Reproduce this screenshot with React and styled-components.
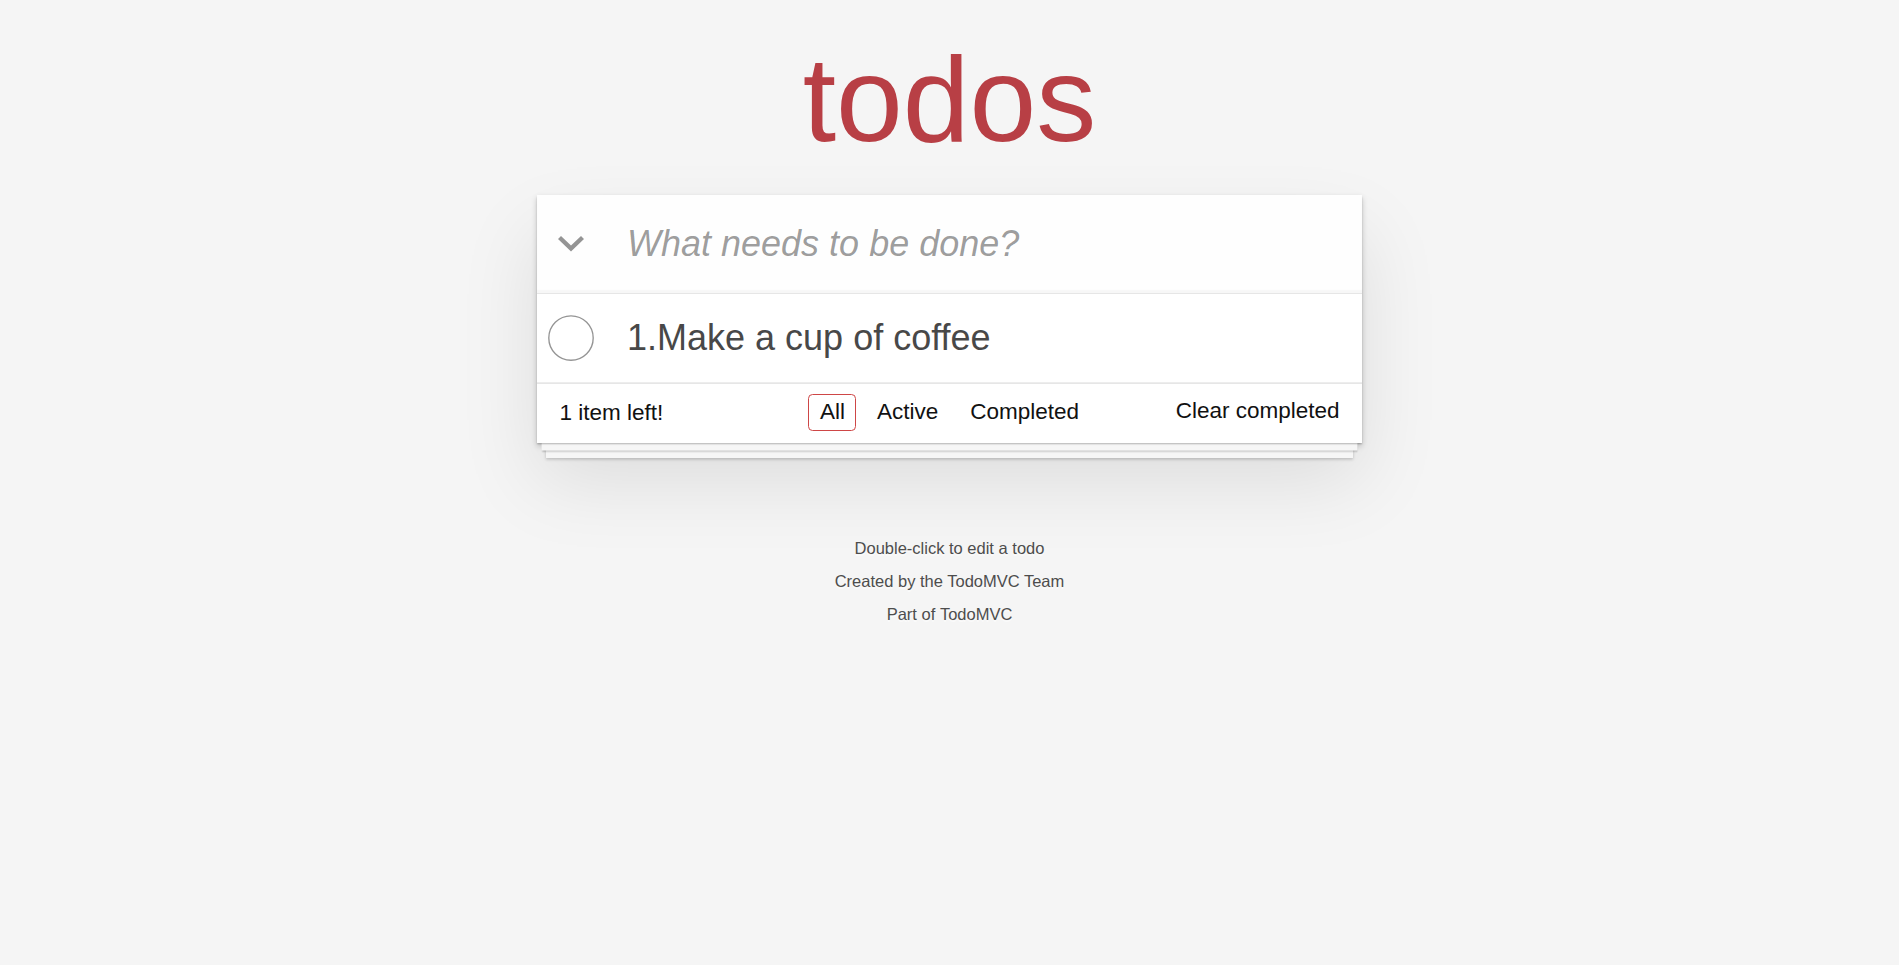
import { useState } from 'react'
import styled, { createGlobalStyle } from 'styled-components'

const GlobalStyle = createGlobalStyle`
  html,
  body {
    margin: 0;
    padding: 0;
  }

  body {
    background: #f5f5f5;
    color: #111111;
    font-family: 'Liberation Sans', Arial, sans-serif;
    font-size: 21px;
    font-weight: 300;
    line-height: 29.4px;
    min-width: 345px;
  }
`

const Page = styled.div`
  margin: 0 auto;
  padding-top: 39px;
  width: 825px;
`

const Title = styled.h1`
  color: #b83f45;
  font-size: 120px;
  font-weight: 200;
  line-height: 120px;
  margin: 0 0 36px;
  text-align: center;
  text-rendering: optimizeLegibility;
`

// the stacked "pages" under the footer are just extra shadows on the card
const Card = styled.section`
  background: #fff;
  box-shadow: 0 1.5px 1.5px rgba(0, 0, 0, 0.2), 0 12px 0 -4.5px #f6f6f6, 0 13.5px 1.5px -4.5px rgba(0, 0, 0, 0.2),
    0 24px 0 -9px #f6f6f6, 0 25.5px 3px -9px rgba(0, 0, 0, 0.2), 0 3px 6px 0 rgba(0, 0, 0, 0.2),
    0 37.5px 75px 0 rgba(0, 0, 0, 0.1);
`

const Header = styled.header`
  align-items: center;
  background: rgba(0, 0, 0, 0.003);
  box-shadow: inset 0 -3px 1.5px rgba(0, 0, 0, 0.03);
  display: flex;
  height: 97.5px;
`

const ToggleAll = styled.button`
  align-items: center;
  background: none;
  border: none;
  cursor: pointer;
  display: flex;
  flex: 0 0 67.5px;
  height: 100%;
  justify-content: center;
  padding: 0;
`

const NewTodo = styled.input`
  background: transparent;
  border: none;
  box-sizing: border-box;
  color: inherit;
  flex: 1;
  font-family: inherit;
  font-size: 36px;
  font-weight: inherit;
  height: 100%;
  outline: none;
  padding: 0 36px 0 22.5px;

  &::placeholder {
    color: rgba(0, 0, 0, 0.4);
    font-style: italic;
    font-weight: 400;
  }
`

const TodoList = styled.ul`
  border-top: 1px solid #e6e6e6;
  list-style: none;
  margin: 0;
  padding: 0;
`

const TodoItem = styled.li`
  align-items: center;
  border-bottom: 1px solid #ededed;
  display: flex;
  font-size: 36px;
`

const Toggle = styled.button`
  align-items: center;
  background: none;
  border: none;
  cursor: pointer;
  display: flex;
  flex: 0 0 67.5px;
  justify-content: center;
  padding: 0 0 0 1px;
`

const TodoLabel = styled.label`
  color: ${({ $done }) => ($done ? '#949494' : '#484848')};
  display: block;
  flex: 1;
  font-weight: 400;
  line-height: 1.2;
  padding: 22.5px;
  text-decoration: ${({ $done }) => ($done ? 'line-through' : 'none')};
  word-break: break-all;
`

const Footer = styled.footer`
  align-items: center;
  border-top: 1px solid #e6e6e6;
  display: grid;
  font-size: 22.5px;
  grid-template-columns: 1fr auto 1fr;
  height: 29.4px;
  line-height: 29.4px;
  padding: 14px 22.5px 16px;
`

const Count = styled.span`
  justify-self: start;
`

const Filters = styled.ul`
  align-items: center;
  display: flex;
  height: 29.4px;
  list-style: none;
  margin: 0;
  padding: 0;
`

const FilterLink = styled.a`
  border: 1px solid ${({ $selected }) => ($selected ? '#ce4646' : 'transparent')};
  border-radius: 4.5px;
  color: inherit;
  cursor: pointer;
  display: block;
  line-height: normal;
  margin: 4.5px;
  padding: 4.5px 10.5px;
  text-decoration: none;
`

const ClearButton = styled.button`
  align-self: start;
  background: none;
  border: none;
  color: inherit;
  cursor: pointer;
  font-family: inherit;
  font-size: 100%;
  font-weight: inherit;
  justify-self: end;
  line-height: 25px;
  padding: 0;
`

const Info = styled.footer`
  color: #4d4d4d;
  font-size: 16.5px;
  margin-top: 96.5px;
  text-align: center;
  text-shadow: 0 1.5px 0 rgba(255, 255, 255, 0.5);

  p {
    line-height: 1;
    margin: 16.5px 0;
  }

  a {
    color: inherit;
    font-weight: 400;
    text-decoration: none;
  }
`

const Chevron = ({ color }) => (
  <svg width='26' height='16' viewBox='0 0 26 16'>
    <polygon points='0,3 3,0 13,9.5 23,0 26,3 13,15.5' fill={color} />
  </svg>
)

const Circle = ({ done }) => (
  <svg width='46' height='46' viewBox='0 0 46 46'>
    <circle cx='23' cy='23' r='22.2' fill='none' stroke='#949494' strokeWidth='1.35' />
    {done && <polyline points='13,23 20,30 33,16' fill='none' stroke='#59a193' strokeWidth='2.5' />}
  </svg>
)

const FILTERS = ['All', 'Active', 'Completed']

const App = () => {
  const [todos, setTodos] = useState([{ id: 1, title: '1.Make a cup of coffee', done: false }])
  const [filter, setFilter] = useState('All')
  const [text, setText] = useState('')

  const left = todos.filter(t => !t.done).length
  const allDone = todos.length > 0 && left === 0

  const visible = todos.filter(t => (filter === 'Active' ? !t.done : filter === 'Completed' ? t.done : true))

  const handleKeyDown = e => {
    if (e.key === 'Enter' && text.trim()) {
      setTodos([...todos, { id: Date.now(), title: text.trim(), done: false }])
      setText('')
    }
  }

  const toggle = id => setTodos(todos.map(t => (t.id === id ? { ...t, done: !t.done } : t)))
  const toggleAll = () => setTodos(todos.map(t => ({ ...t, done: !allDone })))

  return (
    <>
      <GlobalStyle />
      <Page>
        <Title>todos</Title>
        <Card>
          <Header>
            <ToggleAll onClick={toggleAll} aria-label='Toggle all'>
              <Chevron color={allDone ? '#484848' : '#949494'} />
            </ToggleAll>
            <NewTodo
              placeholder='What needs to be done?'
              value={text}
              onChange={e => setText(e.target.value)}
              onKeyDown={handleKeyDown}
            />
          </Header>
          <TodoList>
            {visible.map(({ id, title, done }) => (
              <TodoItem key={id}>
                <Toggle onClick={() => toggle(id)} aria-label='Toggle'>
                  <Circle done={done} />
                </Toggle>
                <TodoLabel $done={done}>{title}</TodoLabel>
              </TodoItem>
            ))}
          </TodoList>
          <Footer>
            <Count>
              {left} {left === 1 ? 'item' : 'items'} left!
            </Count>
            <Filters>
              {FILTERS.map(name => (
                <li key={name}>
                  <FilterLink $selected={filter === name} onClick={() => setFilter(name)}>
                    {name}
                  </FilterLink>
                </li>
              ))}
            </Filters>
            <ClearButton onClick={() => setTodos(todos.filter(t => !t.done))}>Clear completed</ClearButton>
          </Footer>
        </Card>
        <Info>
          <p>Double-click to edit a todo</p>
          <p>
            Created by <a>the TodoMVC Team</a>
          </p>
          <p>
            Part of <a>TodoMVC</a>
          </p>
        </Info>
      </Page>
    </>
  )
}

export default App
